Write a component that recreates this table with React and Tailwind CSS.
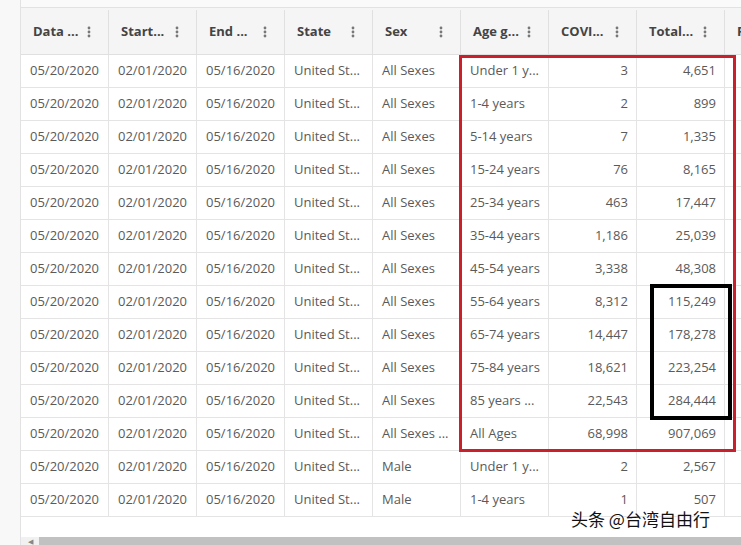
import React from "react";

const ages = [
  ["Under 1 y...", "3", "4,651"],
  ["1-4 years", "2", "899"],
  ["5-14 years", "7", "1,335"],
  ["15-24 years", "76", "8,165"],
  ["25-34 years", "463", "17,447"],
  ["35-44 years", "1,186", "25,039"],
  ["45-54 years", "3,338", "48,308"],
  ["55-64 years", "8,312", "115,249"],
  ["65-74 years", "14,447", "178,278"],
  ["75-84 years", "18,621", "223,254"],
  ["85 years ...", "22,543", "284,444"],
  ["All Ages", "68,998", "907,069"],
];

const rows = [
  ...ages.map((a, i) => ({ sex: i === 11 ? "All Sexes ..." : "All Sexes", age: a[0], covid: a[1], total: a[2] })),
  { sex: "Male", age: "Under 1 y...", covid: "2", total: "2,567" },
  { sex: "Male", age: "1-4 years", covid: "1", total: "507" },
];

const headers = ["Data ...", "Start...", "End ...", "State", "Sex", "Age g...", "COVI...", "Total..."];

function Dots() {
  return (
    <svg width="4" height="14" viewBox="0 0 4 14" className="shrink-0">
      <circle cx="2" cy="3" r="1.4" fill="#777" />
      <circle cx="2" cy="7" r="1.4" fill="#777" />
      <circle cx="2" cy="11" r="1.4" fill="#777" />
    </svg>
  );
}

export default function App() {
  return (
    <div
      className="relative w-[741px] h-[545px] overflow-hidden bg-[#f8f8f8] text-[13px]"
      style={{ fontFamily: '"Open Sans", "Noto Sans", sans-serif' }}
    >
      <div className="flex h-full">
        <div className="w-[20px] shrink-0 bg-[#f8f8f8]" />
        <div className="flex-1 flex flex-col border-l border-[#e2e2e2] bg-white overflow-hidden">
          <div className="h-[8px] bg-[#fafafa] border-b border-[#e2e2e2] shrink-0" />
          <div className="flex h-[47px] pt-[2px] bg-[#f5f5f5] border-b border-[#e0e0e0] shrink-0">
            {headers.map((h) => (
              <div
                key={h}
                className="w-[88px] shrink-0 flex items-center justify-between pl-[12px] pr-[17px] border-r border-[#e0e0e0] font-bold text-[#444]"
              >
                <span>{h}</span>
                <Dots />
              </div>
            ))}
            <div className="flex items-center pl-[12px] font-bold text-[#444]">R</div>
          </div>
          {rows.map((r, i) => (
            <div key={i} className="flex h-[33px] border-b border-[#e4e4e4] text-[#5a5a5a] shrink-0">
              <div className="w-[88px] shrink-0 flex items-center pl-[9px] border-r border-[#e4e4e4]">05/20/2020</div>
              <div className="w-[88px] shrink-0 flex items-center pl-[9px] border-r border-[#e4e4e4]">02/01/2020</div>
              <div className="w-[88px] shrink-0 flex items-center pl-[9px] border-r border-[#e4e4e4]">05/16/2020</div>
              <div className="w-[88px] shrink-0 flex items-center pl-[9px] border-r border-[#e4e4e4] whitespace-nowrap">United St...</div>
              <div className="w-[88px] shrink-0 flex items-center pl-[9px] border-r border-[#e4e4e4] whitespace-nowrap">{r.sex}</div>
              <div className="w-[88px] shrink-0 flex items-center pl-[9px] border-r border-[#e4e4e4] whitespace-nowrap">{r.age}</div>
              <div className="w-[88px] shrink-0 flex items-center justify-end pr-[8px] border-r border-[#e4e4e4]">{r.covid}</div>
              <div className="w-[88px] shrink-0 flex items-center justify-end pr-[8px] border-r border-[#e4e4e4]">{r.total}</div>
              <div className="flex-1" />
            </div>
          ))}
          <div className="flex-1" />
          <div className="h-[8px] flex shrink-0 bg-[#f1f1f1]">
            <div className="w-[18px] flex items-center justify-center text-[7px] text-[#888] leading-none">◀</div>
            <div className="flex-1 bg-[#c1c1c1]" />
          </div>
        </div>
      </div>

      <div className="absolute left-[459px] top-[55px] w-[277px] h-[397px] border-[3px] border-[#c9202b]" />
      <div className="absolute left-[650px] top-[284px] w-[82px] h-[136px] border-[4px] border-black" />

      <div
        className="absolute left-[571px] top-[506px] text-[17px] text-[#111] whitespace-nowrap"
        style={{ fontFamily: '"Noto Sans CJK SC", "Noto Sans", sans-serif', textShadow: "0 0 2px #fff, 0 0 2px #fff" }}
      >
        头条 @台湾自由行
      </div>
    </div>
  );
}
